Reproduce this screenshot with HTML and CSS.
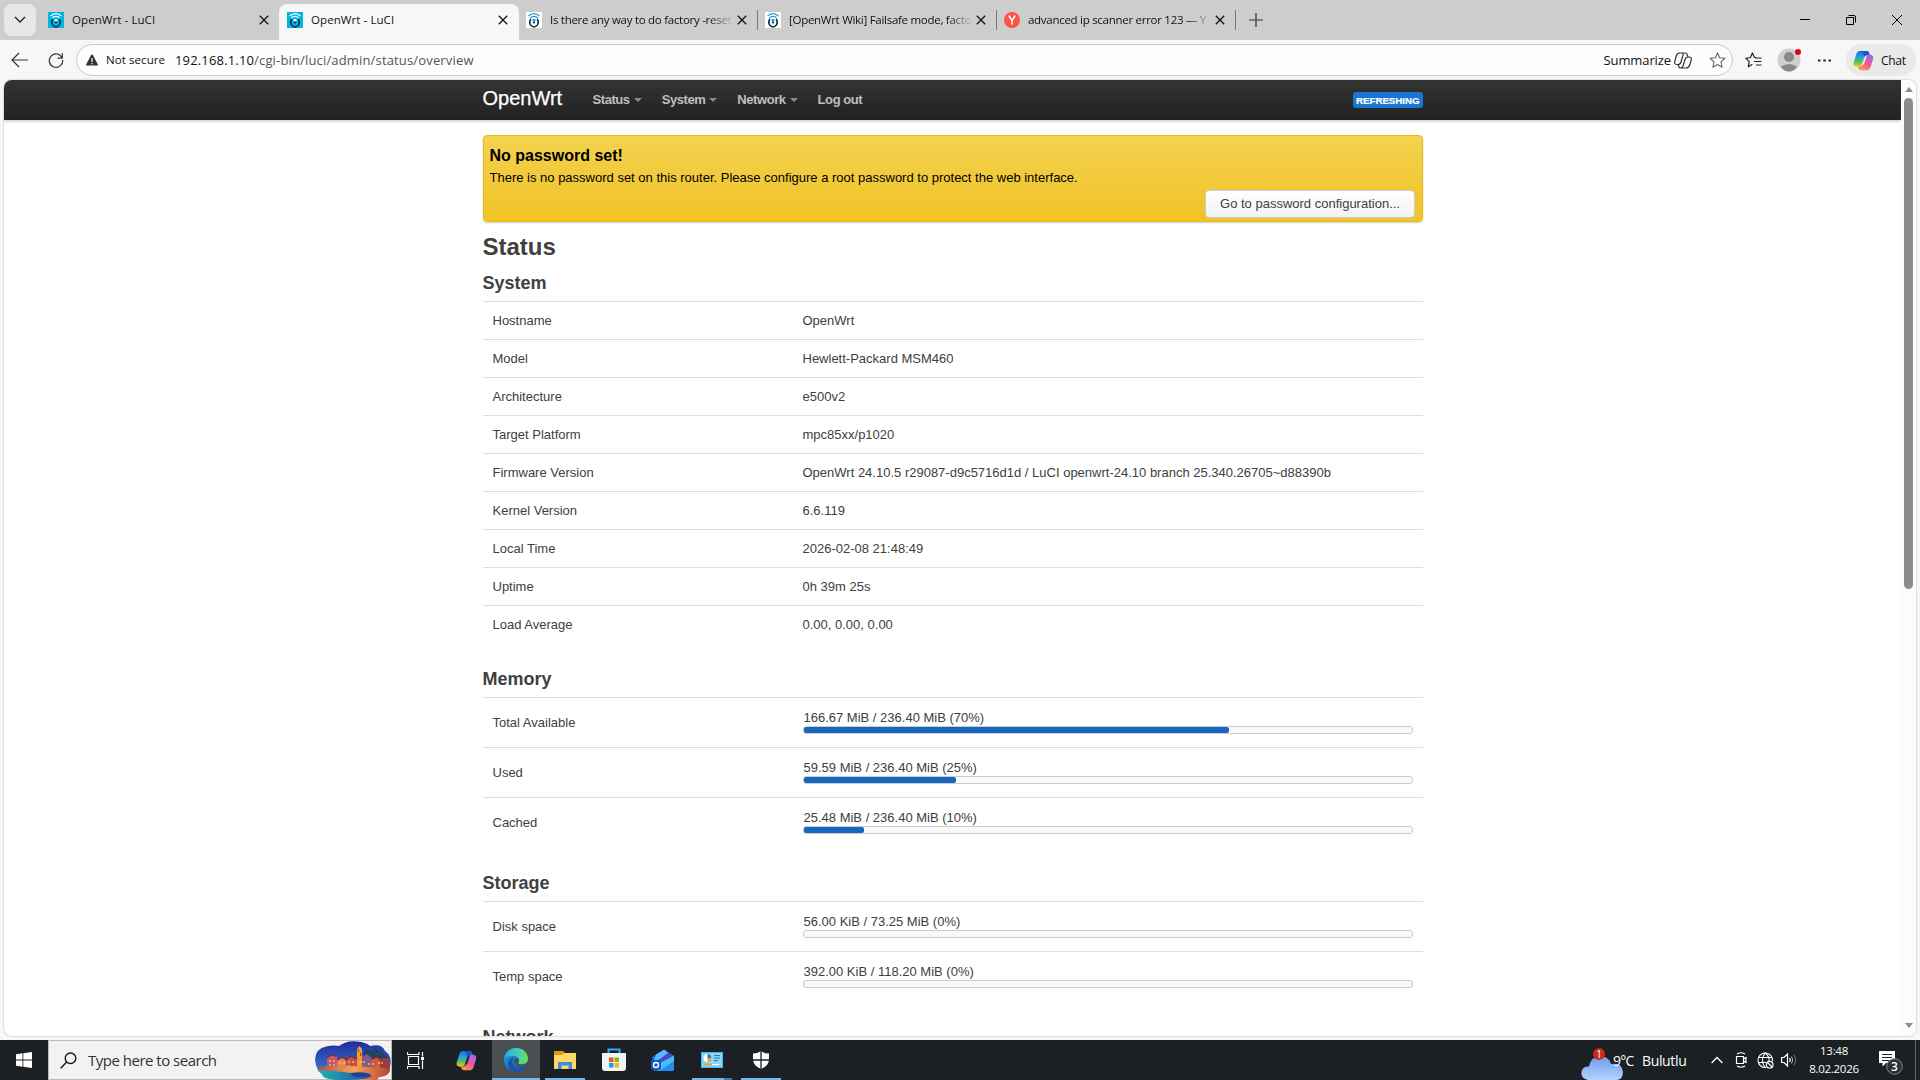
FILE: index.html
```html
<!DOCTYPE html>
<html lang="en">
<head>
<meta charset="utf-8">
<title>OpenWrt - LuCI</title>
<link rel="stylesheet" href="styles.css">
</head>
<body>
<svg class="defs" width="0" height="0" aria-hidden="true">
  <defs>
    <linearGradient id="copA" x1="0" y1="0" x2="0" y2="1"><stop offset="0" stop-color="#1b6be0"/><stop offset=".4" stop-color="#1fa5dd"/><stop offset=".7" stop-color="#5fc04a"/><stop offset="1" stop-color="#f2c51d"/></linearGradient>
    <linearGradient id="copB" x1="0.6" y1="0" x2="0.2" y2="1"><stop offset="0" stop-color="#a865f0"/><stop offset=".5" stop-color="#f0559c"/><stop offset="1" stop-color="#ff9a4a"/></linearGradient>
    <linearGradient id="edgeA" x1="0" y1="0" x2="1" y2="0"><stop offset="0" stop-color="#2fa6e6"/><stop offset=".6" stop-color="#3fd0b8"/><stop offset="1" stop-color="#6fe04c"/></linearGradient>
    <linearGradient id="edgeB" x1="0" y1="0" x2="1" y2="1"><stop offset="0" stop-color="#2a9be2"/><stop offset="1" stop-color="#0f4f9e"/></linearGradient>
    <linearGradient id="cloud" x1="0" y1="0" x2="0" y2="1"><stop offset="0" stop-color="#6d9df0"/><stop offset="1" stop-color="#b4d3fb"/></linearGradient>
    <linearGradient id="sky" x1="0" y1="0" x2="0" y2="1"><stop offset="0" stop-color="#202a9c"/><stop offset="1" stop-color="#3c8be0"/></linearGradient>
    <linearGradient id="sea" x1="0" y1="0" x2="1" y2="0"><stop offset="0" stop-color="#23b5b0"/><stop offset="1" stop-color="#1a4fa8"/></linearGradient>
    <linearGradient id="sand" x1="0" y1="0" x2="1" y2="0"><stop offset="0" stop-color="#b3504a"/><stop offset=".5" stop-color="#f5a25a"/><stop offset="1" stop-color="#b8452f"/></linearGradient>
    <symbol id="wrt" viewBox="0 0 16 16">
      <path d="M2.500 4Q8-.8 13.500 4M4.300 6Q8 2.800 11.700 6" fill="none" stroke="currentColor" stroke-width="1.200"/>
      <path d="M4.800 7Q2.800 10 4.500 13Q8 16.800 11.500 13Q13.200 10 11.200 7" fill="none" stroke="#0b2b4d" stroke-width="1.500"/>
      <path d="M6 8Q8 6 10 8L8 10z" fill="currentColor"/><circle cx="8" cy="10.500" r="1.100" fill="#0b2b4d"/>
    </symbol>
    <symbol id="x" viewBox="0 0 10 10"><path d="M.8.8l8.400 8.400M9.200.8L.8 9.200" stroke="#111" stroke-width="1.300"/></symbol>
    <symbol id="copilot" viewBox="0 0 24 24">
      <path d="M8 1h7.500c1.600 0 2.300.8 2.800 2.200l.9 2.800h-3.400c-1.600 0-2.400.8-2.900 2.400L10.300 16c-.6 2-1.500 3-3.500 3H4.500C1.500 19 0 17 .8 14L4 4.200C4.700 2 5.800 1 8 1z" fill="url(#copA)"/>
      <path d="M8 1h7.500c1.600 0 2.300.8 2.800 2.200l.9 2.800h-3.400c-1.600 0-2.400.8-2.900 2.400L11.500 3.500C10.800 1.800 9.500 1 8 1z" fill="#145cc4"/>
      <path d="M16 23H9.500c-1.600 0-2.800-.8-3.300-2.200L5.600 19h2c2 0 3-.9 3.600-2.500h1.300L15.300 8c.6-2 1.300-2.700 2.800-2.700h1.200c3 0 4.500 2 3.700 5L20 19.800c-.7 2.200-1.800 3.200-4 3.200z" fill="url(#copB)"/>
    </symbol>
  </defs>
</svg>

<header class="tabstrip">
  <button class="tab-search"><svg width="12" height="8" viewBox="0 0 12 8"><path d="M1 1l5 5 5-5" fill="none" stroke="#222" stroke-width="1.300"/></svg></button>
  <div class="tab first"><span class="fav blue"><svg><use href="#wrt"/></svg></span><span class="label">OpenWrt - LuCI</span><svg class="close"><use href="#x"/></svg></div>
  <div class="tab active"><span class="fav blue"><svg><use href="#wrt"/></svg></span><span class="label">OpenWrt - LuCI</span><svg class="close"><use href="#x"/></svg></div>
  <div class="tab sep"><span class="fav white"><svg><use href="#wrt"/></svg></span><span class="label fade">Is there any way to do factory -reset</span><svg class="close"><use href="#x"/></svg></div>
  <div class="tab sep"><span class="fav white"><svg><use href="#wrt"/></svg></span><span class="label fade">[OpenWrt Wiki] Failsafe mode, factory</span><svg class="close"><use href="#x"/></svg></div>
  <div class="tab sep"><span class="fav yandex"><svg viewBox="0 0 16 16"><path d="M4.800 3.500L8 8.500V12.800M11.200 3.500L8 8.500" fill="none" stroke="#fff" stroke-width="1.500"/></svg></span><span class="label fade">advanced ip scanner error 123 — Y</span><svg class="close"><use href="#x"/></svg></div>
  <svg class="plus" width="14" height="14" viewBox="0 0 14 14"><path d="M7 0v14M0 7h14" stroke="#333" stroke-width="1.200"/></svg>
  <div class="window-buttons">
    <svg width="10" height="10" viewBox="0 0 10 10"><path d="M0 4.500h10" stroke="#000"/></svg>
    <svg width="10" height="10" viewBox="0 0 10 10"><path d="M.5 2.500h7v7h-7zM2.500.5h5.500q1.500 0 1.500 1.500v5.500" fill="none" stroke="#000"/></svg>
    <svg width="10" height="10" viewBox="0 0 10 10"><path d="M0 0l10 10M10 0L0 10" stroke="#000"/></svg>
  </div>
</header>

<div class="toolbar">
  <svg class="back" width="17" height="16" viewBox="0 0 17 16"><path d="M8 1L1 8l7 7M1 8h16" fill="none" stroke="#333" stroke-width="1.200"/></svg>
  <svg class="reload" width="16" height="16" viewBox="0 0 16 16"><path d="M14.200 6A6.700 6.700 0 1 0 14.700 8M14.300 1.300v4.900H9.500" fill="none" stroke="#333" stroke-width="1.200"/></svg>
  <div class="address">
    <svg class="warn" width="12" height="12" viewBox="0 0 12 12"><path d="M6 .5q.6 0 .9.600l4.900 9.400q.4 1-.6 1H.8q-1 0-.6-1L5.100 1.100Q5.400.5 6 .5z" fill="#333"/><path d="M6 4v4M6 9v1.300" stroke="#fff" stroke-width="1.200"/></svg>
    <span class="secure">Not secure</span>
    <span class="url"><span class="host">192.168.1.10</span>/cgi-bin/luci/admin/status/overview</span>
    <span class="summarize">Summarize</span>
    <svg class="cop-line" width="18" height="17" viewBox="0 0 18 17"><path d="M5.500 1h6q1.300 0 1.700 1.500l.8 2.500h1q3 0 2.200 3l-1.500 5q-.9 3-3.500 3H6.500q-1.300 0-1.700-1.500L4 12.500H3q-3 0-2.200-3L2.200 4Q3 1 5.500 1zM8 1q1.500 0 1 2L7 10q-.7 2.500-3 2.500M14 5q-2.200 0-3 2.500L9 14q-.6 2-2.500 2" fill="none" stroke="#333" stroke-width="1.200"/></svg>
    <svg class="star" width="17" height="16" viewBox="0 0 17 16"><path d="M8.500 1l2.200 4.800 5.200.6-3.900 3.600 1.100 5.200-4.600-2.600-4.600 2.600L5 10 1.100 6.400l5.200-.6z" fill="none" stroke="#666" stroke-width="1.100" stroke-linejoin="round"/></svg>
  </div>
  <svg class="favs" width="17" height="17" viewBox="0 0 17 17"><path d="M11 5.500H9.500L7.400 1 5.400 5.500.8 6.300l3.400 3.400-.9 5 4.100-2.400M10 6h6.500M9 9.500h7.500M11 13h5.500" fill="none" stroke="#222" stroke-width="1.200" stroke-linejoin="round"/></svg>
  <svg class="avatar" width="24" height="24" viewBox="0 0 24 24"><circle cx="12" cy="12" r="11.500" fill="#d1cfcd"/><circle cx="12" cy="9" r="5" fill="#8c8784"/><path d="M4 18.500q8-5 16 0Q17 23.500 12 23.500T4 18.500z" fill="#8c8784"/><circle cx="21" cy="4" r="3" fill="#e60012"/></svg>
  <svg class="dots" width="13" height="3" viewBox="0 0 13 3"><path d="M0 .5h2.400v2H0zM5.300.5h2.400v2H5.300zM10.600.5H13v2h-2.400z" fill="#222"/></svg>
  <div class="chat"><svg width="23" height="21"><use href="#copilot"/></svg><span>Chat</span></div>
</div>

<main class="viewport">
  <div class="page">
    <nav class="navbar">
      <div class="container nav-inner">
        <a class="brand">OpenWrt</a>
        <a class="item caret">Status</a><a class="item caret">System</a><a class="item caret">Network</a><a class="item">Log out</a>
        <span class="badge">REFRESHING</span>
      </div>
    </nav>
    <div class="container">
      <section class="alert">
        <h4>No password set!</h4>
        <p>There is no password set on this router. Please configure a root password to protect the web interface.</p>
        <button class="btn">Go to password configuration...</button>
      </section>
      <h2>Status</h2>
      <h3>System</h3>
      <div class="table">
        <div class="row"><span>Hostname</span><span>OpenWrt</span></div>
        <div class="row"><span>Model</span><span>Hewlett-Packard MSM460</span></div>
        <div class="row"><span>Architecture</span><span>e500v2</span></div>
        <div class="row"><span>Target Platform</span><span>mpc85xx/p1020</span></div>
        <div class="row"><span>Firmware Version</span><span>OpenWrt 24.10.5 r29087-d9c5716d1d / LuCI openwrt-24.10 branch 25.340.26705~d88390b</span></div>
        <div class="row"><span>Kernel Version</span><span>6.6.119</span></div>
        <div class="row"><span>Local Time</span><span>2026-02-08 21:48:49</span></div>
        <div class="row"><span>Uptime</span><span>0h 39m 25s</span></div>
        <div class="row"><span>Load Average</span><span>0.00, 0.00, 0.00</span></div>
      </div>
      <h3>Memory</h3>
      <div class="table">
        <div class="row tall"><span>Total Available</span><div class="meter"><span>166.67 MiB / 236.40 MiB (70%)</span><div class="bar"><div class="fill" style="width:70%"></div></div></div></div>
        <div class="row tall"><span>Used</span><div class="meter"><span>59.59 MiB / 236.40 MiB (25%)</span><div class="bar"><div class="fill" style="width:25%"></div></div></div></div>
        <div class="row tall"><span>Cached</span><div class="meter"><span>25.48 MiB / 236.40 MiB (10%)</span><div class="bar"><div class="fill" style="width:10%"></div></div></div></div>
      </div>
      <h3>Storage</h3>
      <div class="table">
        <div class="row tall"><span>Disk space</span><div class="meter"><span>56.00 KiB / 73.25 MiB (0%)</span><div class="bar"></div></div></div>
        <div class="row tall"><span>Temp space</span><div class="meter"><span>392.00 KiB / 118.20 MiB (0%)</span><div class="bar"></div></div></div>
      </div>
      <h3>Network</h3>
    </div>
  </div>
  <div class="scrollbar"><i class="up"></i><div class="thumb"></div><i class="down"></i></div>
</main>

<footer class="taskbar">
  <div class="start"><svg width="16" height="16" viewBox="0 0 16 16"><path d="M0 2.200L6.500 1.300V7.500H0zM7.300 1.200L16 0v7.500H7.300zM0 8.400h6.500v6.300L0 13.800zM7.300 8.400H16V16l-8.700-1.200z" fill="#fff"/></svg></div>
  <div class="search">
    <svg width="17" height="17" viewBox="0 0 17 17"><circle cx="10.500" cy="6.300" r="5.300" fill="none" stroke="#111" stroke-width="1.300"/><path d="M6.700 10L.7 16.200" stroke="#111" stroke-width="1.300"/></svg>
    <span>Type here to search</span>
    <svg class="town" width="76" height="39" viewBox="0 0 76 39">
      <path d="M1 24Q-3 9 11 5.500Q18 4 24 5Q32-1 42 .5Q51 1 55 5Q67 2 70 10Q78 15 75 26Q76 36 60 36L20 37Q4 36 1 24z" fill="url(#sky)"/>
      <path d="M48 14Q51 7 56 10Q62 6 67 11L74 17V27H48z" fill="#1b4560"/>
      <path d="M42 26V8l2.500-3L47 8v18z" fill="#efa02a"/><path d="M43.500 8v3M45.500 12v3" stroke="#9c3b20"/>
      <path d="M12 27V17l4-3 6 1v12z" fill="#bd5969"/><path d="M22 27V19l5-3 5 3v8z" fill="#e78050"/><path d="M31 27v-9l5-3 6 3v9z" fill="#c74c4d"/><path d="M47 27V16l5-3 5 4v10z" fill="#87588c"/><path d="M56 28V18l6-2 4 3v9z" fill="#ce593b"/><path d="M65 30V17h9l1 13z" fill="#963b3e"/>
      <path d="M12 17l4-3 6 1M22 19l5-3 5 3M31 18l5-3 6 3M56 18l6-2 4 3" fill="none" stroke="#71304c" stroke-width="1.500"/>
      <path d="M15 19v2m4-2v2m-4 2v2m4-2v2m6-4v2m4-2v2m5-3v2m4-2v2m-4 2v2m12-6v2m3-2v2m5 0v2m4-2v2m6-3v2m3-2v2" stroke="#ffd36a" stroke-width="1.200"/>
      <path d="M3 26Q30 24 52 26Q70 26 75 28Q75 35 64 36L62 39H38Q12 33 3 29z" fill="url(#sand)"/>
      <path d="M2 29Q22 30 35 32Q53 32 57 35Q53 39 28 39Q7 39 7 33z" fill="url(#sea)"/>
      <path d="M35 32Q52 30 56 34Q50 36 39 36z" fill="#203f91"/>
    </svg>
  </div>
  <div class="apps">
    <div class="app"><svg width="18" height="17" viewBox="0 0 18 17"><path d="M1.500 4.500h10v8h-10zM.5 0v2.500h11.500V0M.5 17v-2.500h11.500V17M15.500 0v4.500M15.500 8.500V17" fill="none" stroke="#fff" stroke-width="1.200"/><path d="M14 5h3v3h-3z" fill="#fff"/></svg></div>
    <div class="app"><svg width="23" height="21"><use href="#copilot"/></svg></div>
    <div class="app current"><svg width="24" height="24" viewBox="0 0 24 24"><circle cx="12" cy="12" r="12" fill="url(#edgeB)"/><path d="M.2 10.500C1.300 4 6 0 12 0c7 0 12 5 12 10.500 0 4.500-3.500 6-6.300 6-3 0-4-1.200-3.500-2 1.800-2.700 0-6.500-4.700-6.500C5 8 1.500 9 .2 10.500z" fill="url(#edgeA)"/><path d="M9.500 10c-3.500 4.500.5 10.500 6.500 10.500 3 0 5-1 6.300-2C20 22 16.500 24 12.500 24 5.500 24 3 17 5 13c1-2 3-3 4.500-3z" fill="#1456a6"/><path d="M14.300 14.400c-.6.900.3 2.100 3.400 2.100 2.500 0 5-1 6-3l.3 4-1.500.8c-2 1-4.500 1.300-7 .7-3.500-.8-5.500-4-4.800-7.500.5-1.200 1.800-1.700 2.800-1.200 1.500.8 1.500 2.900.8 4.100z" fill="#4a5052"/></svg></div>
    <div class="app open"><svg width="22" height="18" viewBox="0 0 22 18"><path d="M0 0h9l2 2h11v6H0z" fill="#d99a12"/><path d="M0 4h8l2-2h12v16H0z" fill="#ffd667"/><path d="M4 18v-7h14v7h-3.500v-3.500h-7V18z" fill="#3d8dd9"/></svg></div>
    <div class="app"><svg width="24" height="24" viewBox="0 0 24 24"><path d="M6.500 6V1.500h11V6" fill="none" stroke="#27aef5" stroke-width="2"/><path d="M0 5h24v15q0 3-3 3H3q-3 0-3-3z" fill="#f2f2f2"/><path d="M7 9.500h4.500V14H7z" fill="#f35325"/><path d="M12.500 9.500H17V14h-4.500z" fill="#81bc06"/><path d="M7 15h4.500v4.500H7z" fill="#05a6f0"/><path d="M12.500 15H17v4.500h-4.500z" fill="#ffba08"/></svg></div>
    <div class="app"><svg width="24" height="22" viewBox="0 0 24 22"><path d="M1 8L13 .5 23 7v12q0 3-3 3H5q-3 0-4-3z" fill="#1b62d6"/><path d="M5 5.500L13 .5l6 4L8 13 3 11z" fill="#55b9fa"/><path d="M13 .5L23 7 9 16l-4-3L17 4z" fill="#4a45cb"/><path d="M7 15L23 6.500V19q0 3-3 3H7z" fill="#44c0f5"/><path d="M8 22L23 12v7q0 3-3 3z" fill="#2989ec"/><rect y="11" width="10" height="10" rx="2" fill="#1059bd"/><circle cx="5" cy="16" r="2.500" fill="none" stroke="#fff" stroke-width="1.400"/></svg></div>
    <div class="app open multi"><svg width="22" height="16" viewBox="0 0 22 16"><path d="M0 0h22v16H0z" fill="#4db5e8"/><path d="M1 1h20v14H1z" fill="#8bd4f5"/><circle cx="6.500" cy="6" r="4" fill="#fff"/><path d="M6.500 6V2a4 4 0 0 1 3.900 4z" fill="#1680c4"/><path d="M6.500 6h4a4 4 0 0 1-4 4z" fill="#f69c29"/><path d="M13 3.500h6M13 6h6M13 8.500h4" stroke="#277eaf"/><path d="M3 12.500h8" stroke="#f39c20" stroke-width="1.500"/><path d="M11 12.500h7" stroke="#fff"/></svg></div>
    <div class="app open"><svg width="18" height="18" viewBox="0 0 18 18"><path d="M9 0q3.500 2.500 8 2.500v6Q17 14.500 9 18 1 14.500 1 8.500v-6Q5.500 2.500 9 0z" fill="#fff"/><path d="M9 0v18M0 9h18" stroke="#1a1f21" stroke-width="1.300"/></svg></div>
  </div>
  <div class="tray">
    <svg class="weather" width="44" height="32" viewBox="0 0 44 32"><path d="M8 32Q0 30 1.500 23.500Q3 18 9 18.500Q11 8 20 8.500Q29 8 31 16Q42 14 43 24Q43 31 37 32z" fill="url(#cloud)"/><circle cx="19" cy="6" r="6" fill="#c92b1d"/><text x="19" y="9.500" text-anchor="middle" class="count">1</text></svg>
    <span class="temp">9°C</span><span class="cond">Bulutlu</span>
    <svg class="t-up" width="12" height="8" viewBox="0 0 12 8"><path d="M.6 7L6 1.500 11.400 7" fill="none" stroke="#fff" stroke-width="1.300"/></svg>
    <svg class="t-meet" width="12" height="16" viewBox="0 0 12 16"><path d="M1.500 4.500h7v7h-7zM8.500 7L11 5.500v5L8.500 9M2 2q4-2.500 8 0M2 14q4 2.500 8 0" fill="none" stroke="#fff" stroke-width="1.200"/></svg>
    <svg class="t-globe" width="17" height="17" viewBox="0 0 17 17"><path d="M15.500 9A7.300 7.300 0 1 0 9 15.500M8.200.8Q2.500 8 8.200 15.500M8.200.8Q13 5 12 9M1.500 5.500h13.500M1.500 10.500H9" fill="none" stroke="#fff" stroke-width="1.100"/><circle cx="12.700" cy="12.700" r="3.300" fill="#1a1f21" stroke="#fff" stroke-width="1.200"/><path d="M10.500 10.500l4.500 4.500" stroke="#fff" stroke-width="1.200"/></svg>
    <svg class="t-vol" width="17" height="14" viewBox="0 0 17 14"><path d="M.6 4.500H3L6.500 1v12L3 9.500H.6zM8.500 5q1.500 2 0 4" fill="none" stroke="#fff" stroke-width="1.200"/><path d="M10.500 3.500q2.500 3.500 0 7" fill="none" stroke="#bbb"/><path d="M12.800 1.800q3.800 5.200 0 10.400" fill="none" stroke="#777"/></svg>
    <div class="clock"><span>13:48</span><span>8.02.2026</span></div>
    <svg class="notif" width="26" height="26" viewBox="0 0 26 26"><path d="M0 0h16v12H7l-3.500 3.500V12H0z" fill="#fff"/><path d="M3 3.500h10M3 6.500h10M3 9.500h7" stroke="#1a1f21"/><circle cx="15.500" cy="15.500" r="7.800" fill="#2c3032" stroke="#888" stroke-width="1"/><text x="15.500" y="19.500" text-anchor="middle" class="count big">3</text></svg>
    <i class="peek"></i>
  </div>
</footer>
</body>
</html>
```
FILE: styles.css
```css
* { box-sizing: border-box; }
body { margin: 0; width: 1920px; height: 1080px; overflow: hidden; display: flex; flex-direction: column; background: #f7f7f7; font-family: "Open Sans", "Noto Sans", sans-serif; color: #111; }
svg { display: block; flex: none; }
.defs { position: absolute; }
button { font: inherit; padding: 0; border: 0; }
span { white-space: nowrap; }

.tabstrip { height: 40px; flex: none; display: flex; align-items: center; background: #cdcdcd; font-size: 11.5px; letter-spacing: .08px; }
.tab-search { width: 32px; height: 32px; margin-left: 4px; border-radius: 8px; background: #e7e7e7; display: flex; align-items: center; justify-content: center; }
.tab { display: flex; align-items: center; width: 239px; height: 28px; padding: 0 11px 0 7px; flex: none; }
.tab.first { width: 238px; margin-left: 5px; padding-right: 10px; }
.tab.active { width: 240px; height: 36px; align-self: flex-end; background: #f7f7f7; border-radius: 8px 8px 0 0; padding: 0 11px 4px 8px; }
.tab.sep { border-right: 1px solid #777; height: 20px; padding: 0 10px 0 7px; }
.fav { width: 16px; height: 16px; margin-right: 8px; flex: none; }
.fav svg { width: 16px; height: 16px; }
.blue { background: #00b5e2; color: #fff; }
.white { background: #fff; color: #1699d8; }
.yandex { background: #fc5343; border-radius: 50%; }
.label { overflow: hidden; line-height: 18px; }
.fade { width: 184px; letter-spacing: -.28px; -webkit-mask-image: linear-gradient(90deg, #000 86%, transparent); mask-image: linear-gradient(90deg, #000 86%, transparent); }
.close { width: 10px; height: 10px; margin-left: auto; }
.plus { margin-left: 13px; }
.window-buttons { display: flex; gap: 36px; margin-left: auto; margin-right: 18px; }

.toolbar { height: 40px; flex: none; display: flex; align-items: center; background: #f7f7f7; }
.back { margin-left: 11px; }
.reload { margin: 0 12px 0 20px; }
.address { width: 1657px; height: 32px; border: 1px solid #c9c9c9; border-radius: 16px; background: #fdfdfd; display: flex; align-items: center; padding: 0 6px 0 9px; }
.secure { width: 69px; margin: -1px 0 0 8px; font-size: 11.5px; letter-spacing: .08px; }
.url { font-size: 13px; color: #555; letter-spacing: .16px; }
.host { color: #111; }
.summarize { margin-left: auto; font-size: 13px; letter-spacing: -.1px; }
.cop-line { margin: 0 17px 0 3px; }
.favs { margin-left: 12px; }
.avatar { margin-left: 15px; }
.dots { margin: 0 15px 0 17px; }
.chat { width: 70px; height: 32px; border-radius: 16px; background: #e9e9e9; display: flex; align-items: center; padding-left: 6px; gap: 6px; font-size: 12px; letter-spacing: -.3px; }

.viewport { width: 1912px; height: 956px; margin: 0 4px 4px; flex: none; display: flex; overflow: hidden; border-radius: 8px; background: #fff; box-shadow: 0 0 2px rgba(0,0,0,.35); }
.page { width: 1897px; font: 13px/18px "Liberation Sans", Arial, sans-serif; color: #404040; }
.container { width: 940px; margin: 0 auto; }
.navbar { height: 40px; background: linear-gradient(#333, #222); box-shadow: 0 1px 3px rgba(0,0,0,.25); }
.nav-inner { height: 40px; display: flex; align-items: center; }
.brand { font-size: 20px; color: #fff; width: 110px; margin-top: -5px; -webkit-text-stroke: .25px #fff; }
.item { font-weight: bold; color: #bfbfbf; margin-right: 20px; letter-spacing: -.43px; }
.caret { display: flex; align-items: center; }
.caret::after { content: ""; margin-left: 4px; border: 4px solid transparent; border-top-color: #888; border-bottom: 0; }
.badge { margin-left: auto; height: 16px; padding: 0 3px; border-radius: 3px; background: #1976d2; color: #fff; font-size: 9.75px; font-weight: bold; line-height: 17px; letter-spacing: -.05px; -webkit-text-stroke: .2px #fff; }
.alert { height: 87px; margin-top: 15px; margin-bottom: 7px; padding: 10px 7px 3px 6px; display: flex; flex-direction: column; border: 1px solid #edb90f; border-radius: 4px; background: linear-gradient(#f3d250, #f0c325); color: #000; box-shadow: 0 1px 2px rgba(0,0,0,.2); }
.alert h4 { margin: 0; font-size: 16px; line-height: 20px; }
.alert p { margin: 3px 0; }
.btn { align-self: flex-end; width: 210px; height: 28px; flex: none; border: 1px solid #ccc; border-radius: 4px; background: linear-gradient(#fff, #f2f2f2); color: #404040; padding-left: 1px; }
h2, h3 { margin: 0; line-height: 36px; }
h2 { font-size: 24px; }
h3 { font-size: 18px; }
.table { margin-bottom: 18px; }
.row { height: 38px; border-top: 1px solid #ddd; display: grid; grid-template-columns: 310px 610px; align-items: center; padding: 0 10px; }
.row.tall { height: 50px; }
.meter { padding-bottom: 2px; }
.meter span { display: block; height: 17px; padding-left: 1px; line-height: 18px; }
.bar { height: 8px; border: 1px solid #ccc; border-radius: 3px; background: #f9f9f9; }
.fill { height: 6px; border-radius: 2px; background: #1665c1; }
.scrollbar { width: 15px; background: #fcfcfc; display: flex; flex-direction: column; align-items: center; padding: 7px 0 8px; }
.scrollbar i { border: 4px solid transparent; }
.scrollbar .up { border-top: 0; border-bottom: 5px solid #8b8b8b; }
.scrollbar .down { border-bottom: 0; border-top: 5px solid #8b8b8b; margin-top: auto; }
.thumb { width: 9px; height: 491px; margin-top: 6px; border-radius: 5px; background: #8b8b8b; }

.taskbar { height: 40px; flex: none; display: flex; align-items: center; background: #1a2023; color: #fff; }
.start { width: 48px; display: flex; justify-content: center; }
.search { width: 344px; height: 40px; border: 1px solid #bbb; background: #f2f2f2; color: #333; display: flex; align-items: center; padding-left: 11px; font-size: 15px; }
.search span { margin-left: 11px; letter-spacing: -.5px; }
.search span { letter-spacing: -.1px; width: 134px; letter-spacing: -.5px; }
.search span { letter-spacing: -.5px; }
.town { margin-left: auto; }
.apps { display: flex; gap: 1px; }
.app { width: 48px; height: 40px; display: flex; align-items: center; justify-content: center; }
.app:nth-child(2) { margin-left: 1px; }
.current { margin-left: 1px; background: #4a5052; box-shadow: inset 0 -2px #76b9ed; }
.open { background: linear-gradient(#76b9ed, #76b9ed) 50% 100% / 40px 2px no-repeat; }
.multi { background: linear-gradient(90deg, #76b9ed 32px, #4b7ba5 32px) 50% 100% / 40px 2px no-repeat; }
.tray { display: flex; align-items: center; margin-left: auto; height: 40px; font-size: 14px; }
.weather { align-self: flex-end; margin-right: -11px; }
.temp { width: 29px; z-index: 1; letter-spacing: -.8px; }
.cond { width: 69px; letter-spacing: -.35px; }
.t-up { margin-right: 12px; }
.t-meet { margin-right: 10px; }
.t-globe { margin-right: 7px; }
.t-vol { margin-right: 8px; }
.clock { width: 56px; display: flex; flex-direction: column; align-items: center; font-size: 11.5px; line-height: 18px; letter-spacing: -.3px; }
.notif { margin: 8px 0 0 17px; }
.peek { width: 1px; height: 40px; margin: 0 4px 0 10px; background: #666; }
.count { fill: #fff; font: 10px "Open Sans", sans-serif; }
.big { font-size: 12px; font-weight: 600; }
```
